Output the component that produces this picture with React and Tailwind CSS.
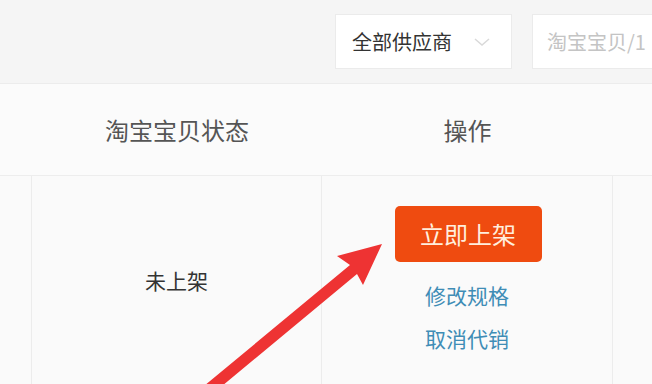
export default function App() {
  return (
    <div
      className="relative w-[652px] h-[384px] overflow-hidden bg-[#fafafa]"
      style={{ fontFamily: '"Noto Sans CJK SC", "Noto Sans", sans-serif' }}
    >
      {/* top filter bar */}
      <div className="h-[84px] bg-[#f5f5f5] border-b border-[#ececec] flex items-center pl-[335px] gap-[20px]">
        <div className="w-[177px] h-[55px] bg-white border border-[#ebebeb] flex items-center pl-[16px] pr-[14px] justify-between shrink-0">
          <span className="text-[20px] text-[#333]">全部供应商</span>
          <svg width="18" height="12" viewBox="0 0 18 12" className="mr-[6px]">
            <path d="M2 3 L9 9 L16 3" fill="none" stroke="#d9d9d9" strokeWidth="1.5" />
          </svg>
        </div>
        <div className="w-[200px] h-[55px] bg-white border border-[#ebebeb] flex items-center pl-[14px] shrink-0">
          <span className="text-[20px] text-[#c4c4c4] whitespace-nowrap">淘宝宝贝/1</span>
        </div>
      </div>

      {/* header row */}
      <div className="h-[92px] flex border-b border-[#ededed] bg-[#fbfbfb]">
        <div className="w-[32px] shrink-0" />
        <div className="w-[290px] shrink-0 flex items-center justify-center text-[24px] text-[#555]">
          淘宝宝贝状态
        </div>
        <div className="w-[291px] shrink-0 flex items-center justify-center text-[24px] text-[#555]">
          操作
        </div>
        <div className="flex-1" />
      </div>

      {/* body row */}
      <div className="flex h-[220px]">
        <div className="w-[32px] shrink-0 border-r border-[#ececec]" />
        <div className="w-[290px] shrink-0 border-r border-[#ececec] flex items-center justify-center pb-[10px]">
          <span className="text-[21px] text-[#333]">未上架</span>
        </div>
        <div className="w-[291px] shrink-0 border-r border-[#ececec] flex flex-col items-center pt-[30px]">
          <div className="w-[147px] h-[56px] rounded-[5px] bg-[#ef4b10] flex items-center justify-center text-[24px] text-[#ffeedd] ml-[2px]">
            立即上架
          </div>
          <div className="mt-[19px] text-[21px] leading-[28px] text-[#3f8db6]">修改规格</div>
          <div className="mt-[15px] text-[21px] leading-[28px] text-[#3f8db6]">取消代销</div>
        </div>
        <div className="flex-1" />
      </div>

      {/* red arrow annotation */}
      <svg
        className="absolute left-0 top-0"
        width="652"
        height="384"
        viewBox="0 0 652 384"
      >
        <polygon
          points="382,244 337,256 350,265 204,386 222,386 357,274 363,285"
          fill="#ee3333"
        />
      </svg>
    </div>
  );
}
